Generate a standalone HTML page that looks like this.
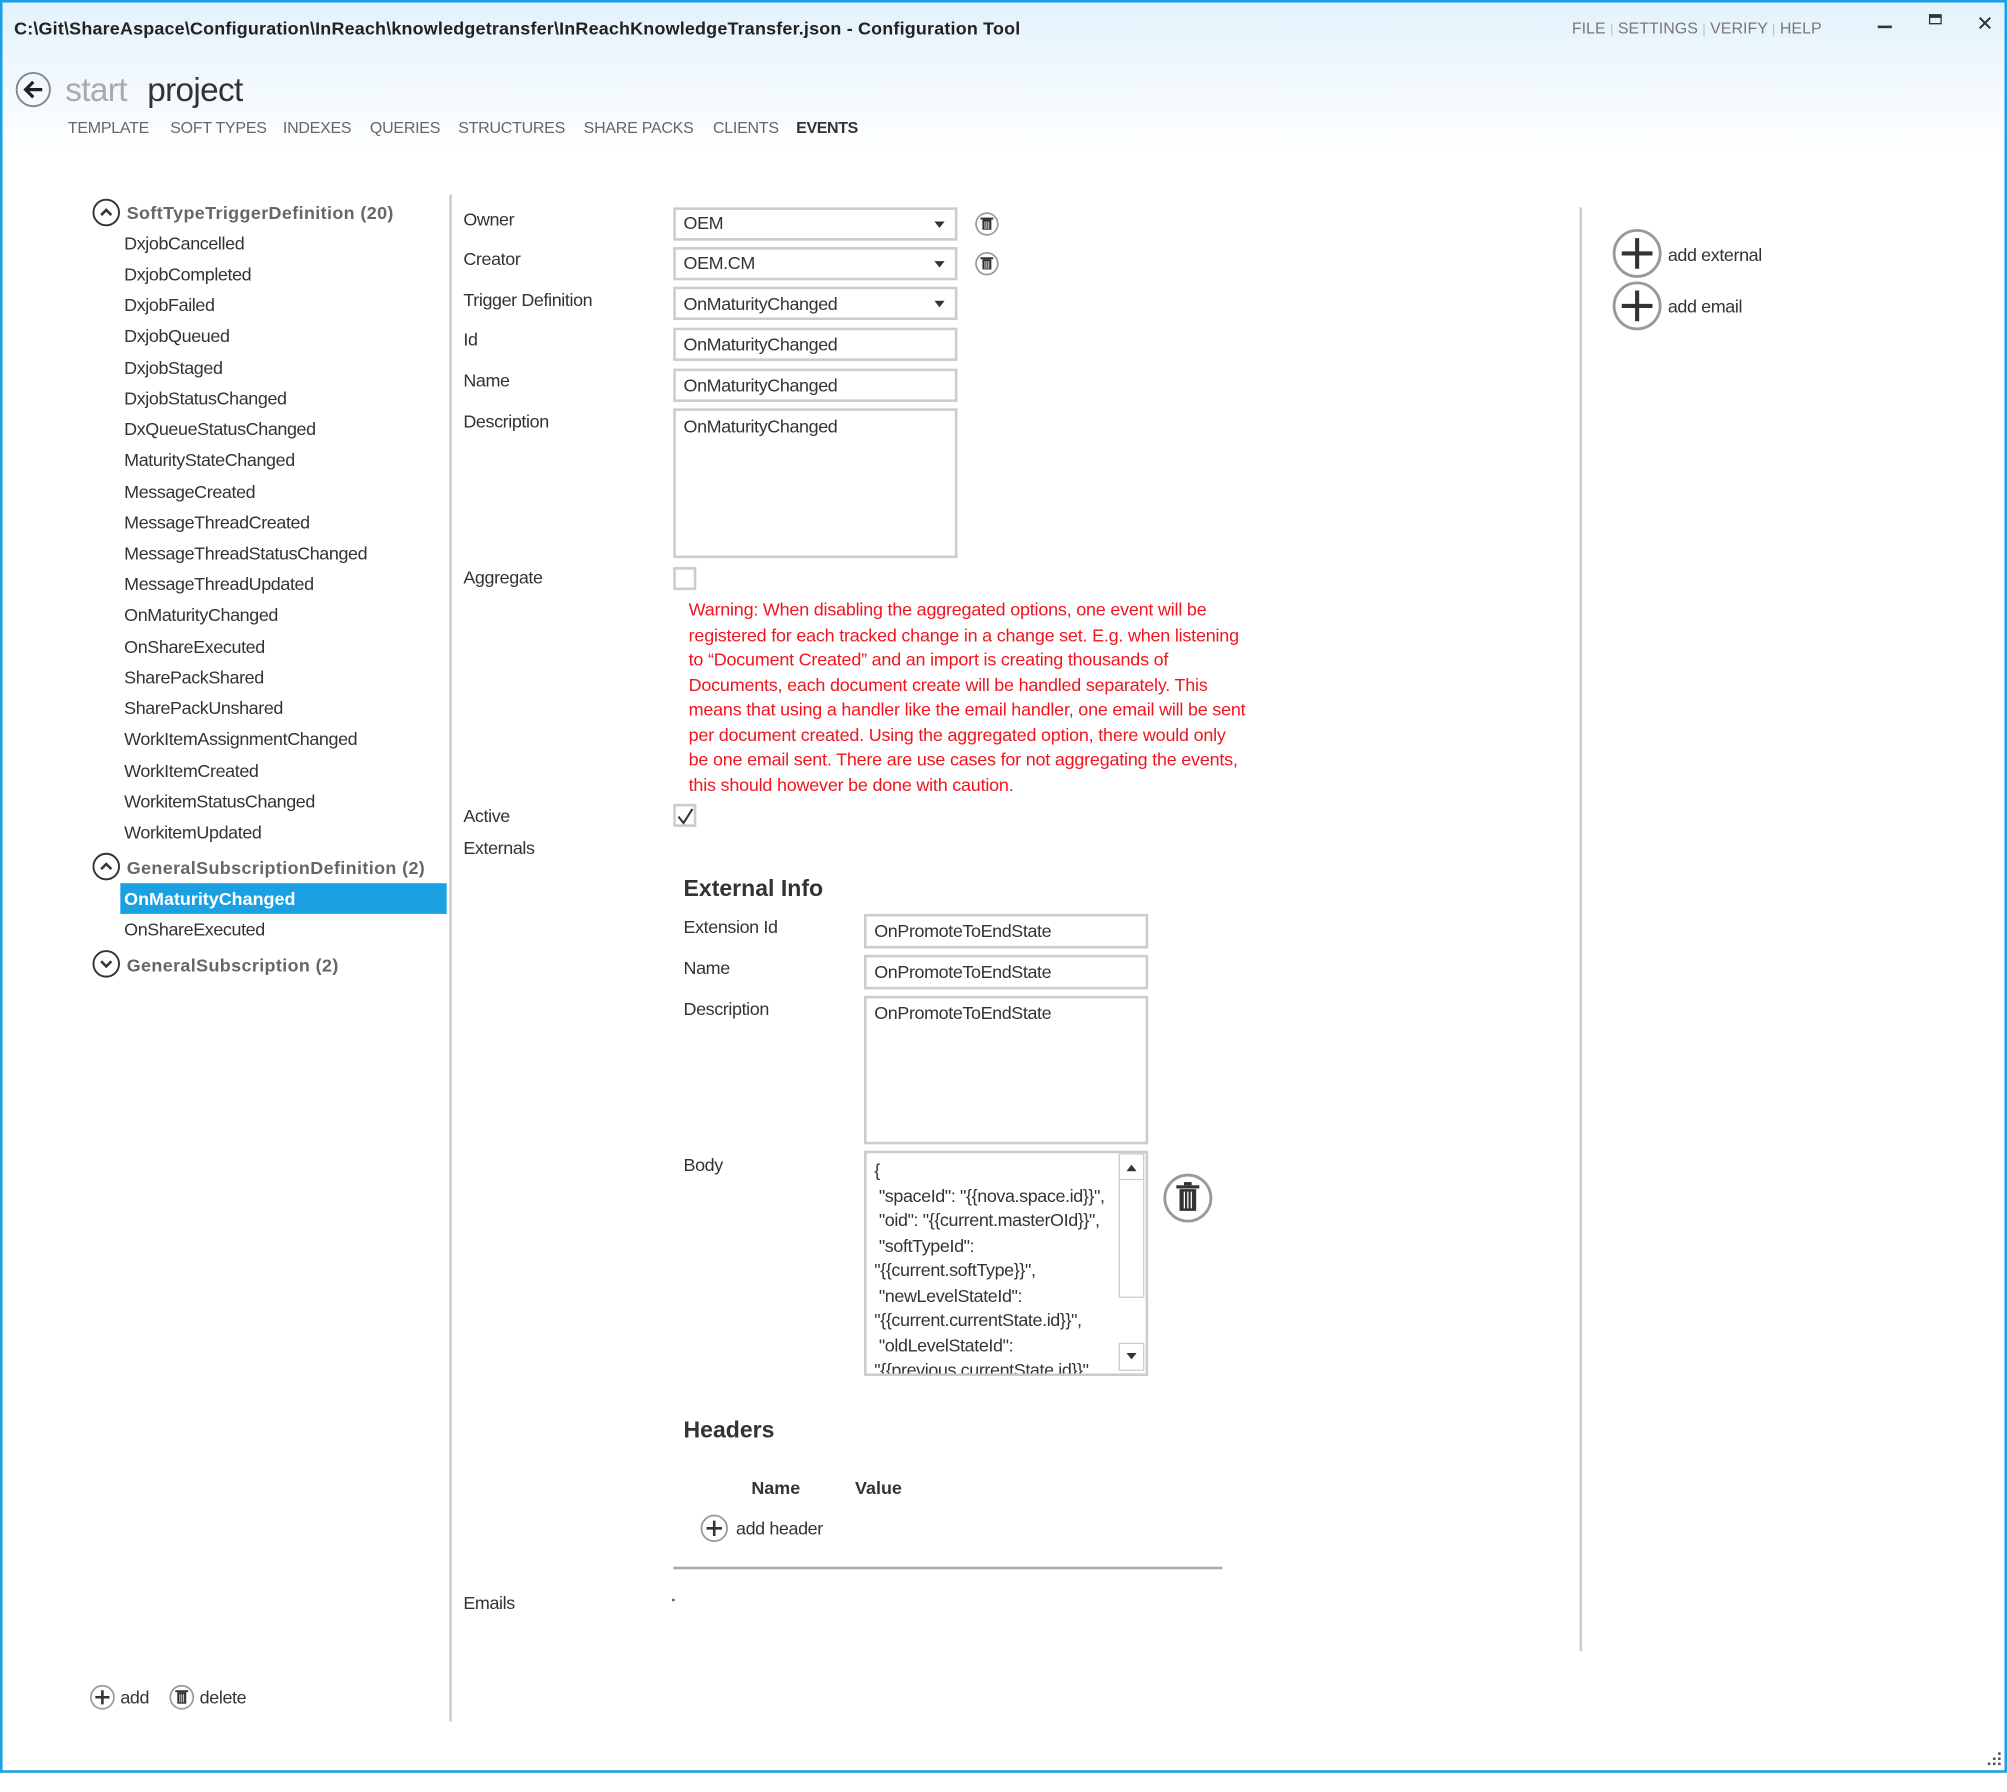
<!DOCTYPE html>
<html><head><meta charset="utf-8">
<style>
html,body{margin:0;padding:0;width:2007px;height:1773px;overflow:hidden;background:#fff;}
#w{position:absolute;left:0;top:0;width:1568px;height:1385px;transform:scale(1.28);transform-origin:0 0;font-family:"Liberation Sans",sans-serif;color:#333;}
#frame{position:absolute;left:0;top:0;width:1564px;height:1381px;border:2px solid #1ba1e2;}
#grad{position:absolute;left:2px;top:2px;width:1564px;height:120px;background:linear-gradient(#e3f2fc 0%,#eef7fd 40%,#fff 100%);}
.t{position:absolute;line-height:20px;font-size:14px;white-space:nowrap;letter-spacing:-0.3px;}
.g{color:#666;}
.b{font-weight:bold;letter-spacing:0;}
.nav{font-size:12.5px;letter-spacing:-0.2px;}
.box{position:absolute;border:2px solid #ccc;background:#fff;box-sizing:border-box;}
.dd::after{content:"";position:absolute;right:8px;top:9px;border-left:4.5px solid transparent;border-right:4.5px solid transparent;border-top:5px solid #333;}
.vl{position:absolute;width:2px;background:#ccc;}
svg{position:absolute;overflow:visible;}
.red{color:#f0141e;letter-spacing:-0.15px;}
</style></head><body>
<div id="w">
<div id="grad"></div>
<div id="frame"></div>

<div class="t b" style="left:11px;top:12px;font-size:14px;color:#222;letter-spacing:0.15px">C:\Git\ShareAspace\Configuration\InReach\knowledgetransfer\InReachKnowledgeTransfer.json - Configuration Tool</div>
<div class="t g" style="left:1228px;top:12px;font-size:12.5px;color:#777;letter-spacing:0">FILE <span style="color:#bbb;font-size:10px">|</span> SETTINGS <span style="color:#bbb;font-size:10px">|</span> VERIFY <span style="color:#bbb;font-size:10px">|</span> HELP</div>
<div style="position:absolute;left:1467px;top:20px;width:11px;height:2px;background:#333"></div>
<div style="position:absolute;left:1507px;top:11px;width:10px;height:8px;border:1.5px solid #333;border-top-width:3px;box-sizing:border-box"></div>
<div class="t" style="left:1544px;top:10px;font-size:16px;color:#333">✕</div>

<svg style="left:0;top:0" width="60" height="100"><circle cx="26" cy="70" r="13" fill="none" stroke="#888" stroke-width="1.5"/><path d="M20 70H33M26 64L20 70L26 76" fill="none" stroke="#222" stroke-width="2.5"/></svg>
<div class="t" style="left:51px;top:55px;font-size:26px;line-height:30px;color:#aaa;letter-spacing:-0.5px">start</div>
<div class="t" style="left:115px;top:55px;font-size:26px;line-height:30px;color:#333;letter-spacing:-0.5px">project</div>

<div class="t g nav" style="left:53px;top:90px">TEMPLATE</div>
<div class="t g nav" style="left:133px;top:90px">SOFT TYPES</div>
<div class="t g nav" style="left:221px;top:90px">INDEXES</div>
<div class="t g nav" style="left:289px;top:90px">QUERIES</div>
<div class="t g nav" style="left:358px;top:90px">STRUCTURES</div>
<div class="t g nav" style="left:456px;top:90px">SHARE PACKS</div>
<div class="t g nav" style="left:557px;top:90px">CLIENTS</div>
<div class="t b nav" style="left:622px;top:90px;color:#333;letter-spacing:-0.3px">EVENTS</div>

<!-- tree -->
<svg style="left:0;top:0" width="100" height="800">
<circle cx="83" cy="166" r="10" fill="none" stroke="#333" stroke-width="1.5"/><path d="M79 168L83 164L87 168" fill="none" stroke="#333" stroke-width="2"/>
<circle cx="83" cy="677" r="10" fill="none" stroke="#333" stroke-width="1.5"/><path d="M79 679L83 675L87 679" fill="none" stroke="#333" stroke-width="2"/>
<circle cx="83" cy="753" r="10" fill="none" stroke="#333" stroke-width="1.5"/><path d="M79 751L83 755L87 751" fill="none" stroke="#333" stroke-width="2"/>
</svg>
<div class="t b" style="left:99px;top:156px;color:#666;letter-spacing:0.3px">SoftTypeTriggerDefinition (20)</div>
<div class="t" style="left:97px;top:180px">DxjobCancelled</div>
<div class="t" style="left:97px;top:204px">DxjobCompleted</div>
<div class="t" style="left:97px;top:228px">DxjobFailed</div>
<div class="t" style="left:97px;top:252px">DxjobQueued</div>
<div class="t" style="left:97px;top:277px">DxjobStaged</div>
<div class="t" style="left:97px;top:301px">DxjobStatusChanged</div>
<div class="t" style="left:97px;top:325px">DxQueueStatusChanged</div>
<div class="t" style="left:97px;top:349px">MaturityStateChanged</div>
<div class="t" style="left:97px;top:374px">MessageCreated</div>
<div class="t" style="left:97px;top:398px">MessageThreadCreated</div>
<div class="t" style="left:97px;top:422px">MessageThreadStatusChanged</div>
<div class="t" style="left:97px;top:446px">MessageThreadUpdated</div>
<div class="t" style="left:97px;top:470px">OnMaturityChanged</div>
<div class="t" style="left:97px;top:495px">OnShareExecuted</div>
<div class="t" style="left:97px;top:519px">SharePackShared</div>
<div class="t" style="left:97px;top:543px">SharePackUnshared</div>
<div class="t" style="left:97px;top:567px">WorkItemAssignmentChanged</div>
<div class="t" style="left:97px;top:592px">WorkItemCreated</div>
<div class="t" style="left:97px;top:616px">WorkitemStatusChanged</div>
<div class="t" style="left:97px;top:640px">WorkitemUpdated</div>
<div class="t b" style="left:99px;top:668px;color:#666;letter-spacing:0.3px">GeneralSubscriptionDefinition (2)</div>
<div style="position:absolute;left:94px;top:690px;width:255px;height:24px;background:#1ba1e2"></div>
<div class="t b" style="left:97px;top:692px;color:#fff">OnMaturityChanged</div>
<div class="t" style="left:97px;top:716px">OnShareExecuted</div>
<div class="t b" style="left:99px;top:744px;color:#666;letter-spacing:0.3px">GeneralSubscription (2)</div>

<svg style="left:0;top:0" width="200" height="1400">
<circle cx="80" cy="1326" r="9" fill="none" stroke="#999" stroke-width="1.3"/><path d="M74.5 1326H85.5M80 1320.5V1331.5" stroke="#333" stroke-width="2"/>
<circle cx="142" cy="1326" r="9" fill="none" stroke="#999" stroke-width="1.3"/><rect x="138.5" y="1322" width="7" height="9" fill="#333"/><rect x="137" y="1320.5" width="10" height="1.5" fill="#333"/><path d="M140.5 1323.5V1330M142 1323.5V1330M143.5 1323.5V1330" stroke="#fff" stroke-width="0.6"/>
</svg>
<div class="t" style="left:94px;top:1316px">add</div>
<div class="t" style="left:156px;top:1316px">delete</div>

<div class="vl" style="left:351px;top:152px;height:1193px"></div>
<div class="vl" style="left:1234px;top:162px;height:1128px"></div>

<!-- form -->
<div class="t" style="left:362px;top:161px">Owner</div>
<div class="t" style="left:362px;top:192px">Creator</div>
<div class="t" style="left:362px;top:224px">Trigger Definition</div>
<div class="t" style="left:362px;top:255px">Id</div>
<div class="t" style="left:362px;top:287px">Name</div>
<div class="t" style="left:362px;top:319px">Description</div>
<div class="t" style="left:362px;top:441px">Aggregate</div>
<div class="t" style="left:362px;top:627px">Active</div>
<div class="t" style="left:362px;top:652px">Externals</div>
<div class="t" style="left:362px;top:1242px">Emails</div>

<div class="box dd" style="left:526px;top:162px;width:222px;height:26px"></div>
<div class="t" style="left:534px;top:164px">OEM</div>
<div class="box dd" style="left:526px;top:193px;width:222px;height:26px"></div>
<div class="t" style="left:534px;top:195px">OEM.CM</div>
<div class="box dd" style="left:526px;top:224px;width:222px;height:26px"></div>
<div class="t" style="left:534px;top:227px">OnMaturityChanged</div>
<div class="box" style="left:526px;top:256px;width:222px;height:26px"></div>
<div class="t" style="left:534px;top:259px">OnMaturityChanged</div>
<div class="box" style="left:526px;top:288px;width:222px;height:26px"></div>
<div class="t" style="left:534px;top:291px">OnMaturityChanged</div>
<div class="box" style="left:526px;top:319px;width:222px;height:117px"></div>
<div class="t" style="left:534px;top:323px">OnMaturityChanged</div>

<svg style="left:0;top:0" width="800" height="220">
<g><circle cx="771" cy="175" r="8.5" fill="none" stroke="#999" stroke-width="1.3"/><rect x="767.5" y="171.5" width="7" height="8" fill="#333"/><rect x="766" y="170" width="10" height="1.5" fill="#333"/><path d="M769.5 173V179M771 173V179M772.5 173V179" stroke="#fff" stroke-width="0.6"/></g>
<g><circle cx="771" cy="206" r="8.5" fill="none" stroke="#999" stroke-width="1.3"/><rect x="767.5" y="202.5" width="7" height="8" fill="#333"/><rect x="766" y="201" width="10" height="1.5" fill="#333"/><path d="M769.5 204V210M771 204V210M772.5 204V210" stroke="#fff" stroke-width="0.6"/></g>
</svg>

<div class="box" style="left:526px;top:443px;width:18px;height:18px"></div>
<div class="box" style="left:526px;top:628px;width:18px;height:18px"></div>
<svg style="left:0;top:0" width="600" height="660"><path d="M530 638L534 643L541 632" fill="none" stroke="#333" stroke-width="1.6"/></svg>

<div class="t red" style="left:538px;top:466px">Warning: When disabling the aggregated options, one event will be</div>
<div class="t red" style="left:538px;top:486px">registered for each tracked change in a change set. E.g. when listening</div>
<div class="t red" style="left:538px;top:505px">to “Document Created” and an import is creating thousands of</div>
<div class="t red" style="left:538px;top:525px">Documents, each document create will be handled separately. This</div>
<div class="t red" style="left:538px;top:544px">means that using a handler like the email handler, one email will be sent</div>
<div class="t red" style="left:538px;top:564px">per document created. Using the aggregated option, there would only</div>
<div class="t red" style="left:538px;top:583px">be one email sent. There are use cases for not aggregating the events,</div>
<div class="t red" style="left:538px;top:603px">this should however be done with caution.</div>

<div class="t b" style="left:534px;top:682px;font-size:18px;line-height:24px;color:#333">External Info</div>
<div class="t" style="left:534px;top:714px">Extension Id</div>
<div class="t" style="left:534px;top:746px">Name</div>
<div class="t" style="left:534px;top:778px">Description</div>
<div class="t" style="left:534px;top:900px">Body</div>

<div class="box" style="left:675px;top:714px;width:222px;height:27px"></div>
<div class="t" style="left:683px;top:717px">OnPromoteToEndState</div>
<div class="box" style="left:675px;top:746px;width:222px;height:27px"></div>
<div class="t" style="left:683px;top:749px">OnPromoteToEndState</div>
<div class="box" style="left:675px;top:778px;width:222px;height:116px"></div>
<div class="t" style="left:683px;top:781px">OnPromoteToEndState</div>

<div class="box" style="left:675px;top:899px;width:222px;height:176px;overflow:hidden">
<div class="t" style="left:6px;top:4px;line-height:19.5px;white-space:pre">{
 "spaceId": "{{nova.space.id}}",
 "oid": "{{current.masterOId}}",
 "softTypeId":
"{{current.softType}}",
 "newLevelStateId":
"{{current.currentState.id}}",
 "oldLevelStateId":
"{{previous.currentState.id}}"</div>
</div>
<div class="box" style="left:874px;top:901px;width:20px;height:113px;border-width:1.5px"></div>
<div class="box" style="left:874px;top:901px;width:20px;height:21px;border-width:1.5px"></div>
<div class="box" style="left:874px;top:1049px;width:20px;height:22px;border-width:1.5px"></div>
<svg style="left:0;top:0" width="960" height="1080">
<path d="M880 915L884 910L888 915Z" fill="#333"/><path d="M880 1057L884 1062L888 1057Z" fill="#333"/>
<circle cx="928" cy="936" r="18" fill="none" stroke="#999" stroke-width="2.2"/>
<rect x="921.5" y="929" width="13" height="17" fill="#333"/><rect x="919" y="926" width="18" height="2.5" fill="#333"/><rect x="925" y="923.5" width="6" height="2.5" fill="#333"/>
<path d="M925.3 931V944M928 931V944M930.7 931V944" stroke="#fff" stroke-width="1"/>
</svg>

<div class="t b" style="left:534px;top:1105px;font-size:18px;line-height:24px;color:#333">Headers</div>
<div class="t b" style="left:587px;top:1152px">Name</div>
<div class="t b" style="left:668px;top:1152px">Value</div>
<svg style="left:0;top:0" width="600" height="1260">
<circle cx="558" cy="1194" r="10" fill="none" stroke="#999" stroke-width="1.4"/><path d="M552 1194H564M558 1188V1200" stroke="#333" stroke-width="2"/>
<rect x="525" y="1249" width="2" height="2" fill="#666"/>
</svg>
<div class="t" style="left:575px;top:1184px">add header</div>
<div style="position:absolute;left:526px;top:1224px;width:429px;height:2px;background:#aaa"></div>

<svg style="left:0;top:0" width="1320" height="270">
<circle cx="1279" cy="198" r="18" fill="none" stroke="#999" stroke-width="2.2"/><path d="M1267 198H1291M1279 186V210" stroke="#333" stroke-width="3.2"/>
<circle cx="1279" cy="239" r="18" fill="none" stroke="#999" stroke-width="2.2"/><path d="M1267 239H1291M1279 227V251" stroke="#333" stroke-width="3.2"/>
</svg>
<div class="t" style="left:1303px;top:189px">add external</div>
<div class="t" style="left:1303px;top:229px">add email</div>

<svg style="left:0;top:0" width="1568" height="1385">
<g fill="#555"><rect x="1561" y="1369" width="2" height="2"/><rect x="1557" y="1373" width="2" height="2"/><rect x="1561" y="1373" width="2" height="2"/><rect x="1553" y="1377" width="2" height="2"/><rect x="1557" y="1377" width="2" height="2"/><rect x="1561" y="1377" width="2" height="2"/></g>
</svg>
</div>
</body></html>
